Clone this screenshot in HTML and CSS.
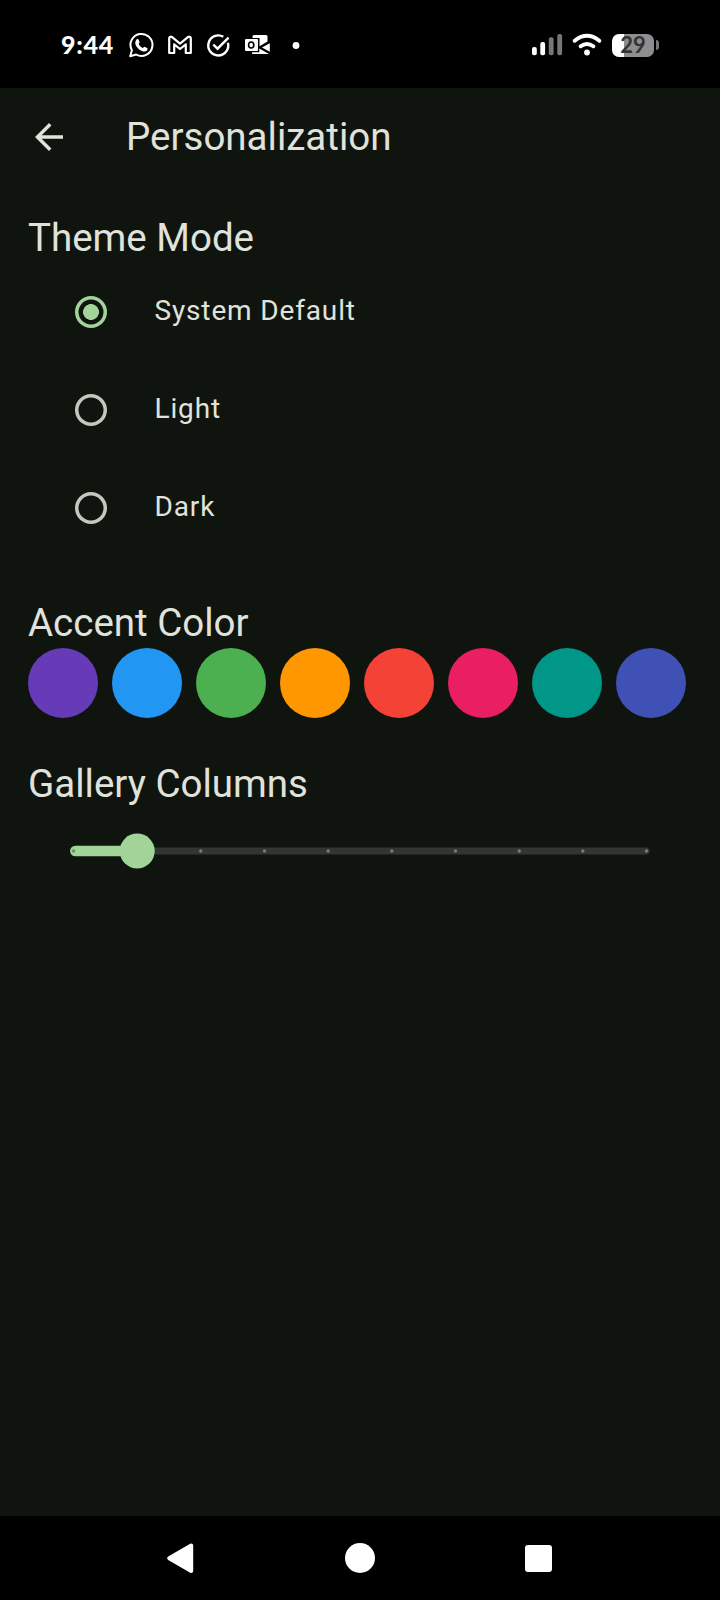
FILE: index.html
```html
<!DOCTYPE html>
<html lang="en">
<head>
<meta charset="utf-8">
<title>Personalization</title>
<link rel="stylesheet" href="styles.css">
</head>
<body>
<div class="screen">
  <header class="status">
    <span class="clock">9:44</span>
    <svg class="notifications" width="180" height="32" viewBox="126 29 180 32" fill="none" stroke="#fff" stroke-width="2">
      <path d="M130.2 56.2l1.7-5.9a11 11 0 1 1 4.2 4.2z" stroke-linejoin="round"/>
      <path d="M136.6 39.4c.6-.6 1.6-.5 1.9.2l1 2.3c.3.8-.9 1.6-.8 2.2.7 1.6 2 2.900 3.800 3.800.7.3 1.500-1.400 2.300-1l2.400 1.200c.7.4.4 1.700-.2 2.400-1.200 1.300-3 1.400-5.200.500-3.300-1.400-5.500-4-6.300-6.400-.6-2 .1-4.200 1.100-5.200z" fill="#fff" stroke="none"/>
      <path d="M169.200 53V38.700q0-2.500 2.600-1.800L180 43.600l8.200-6.700q2.600-.7 2.600 1.800V53h-5v-8.700l-5.800 4.700-5.800-4.700V53z" stroke-linejoin="round" stroke-width="2.200"/>
      <path d="M223.300 36.800a10 10 0 1 0 4.600 6M213.300 44.500l4.200 4.200L228.600 37.600" stroke-width="2.400"/>
      <g stroke="none" fill="#fff">
        <path d="M252.500 38V36.500q0-1.500 1.500-1.500H266q1.500 0 1.500 1.500V41.500L259.500 46.300V38z"/>
        <path d="M262 47.600L269.800 43.200V51.800z"/>
        <path d="M252 53V52.200H259.300V48.500L269 54H253q-1 0-1-1z"/>
        <rect x="245" y="39" width="13" height="12" rx="1"/>
        <ellipse cx="251.200" cy="45" rx="2.600" ry="3" fill="none" stroke="#000" stroke-width="1.600"/>
        <circle cx="296" cy="45.500" r="3.400"/>
      </g>
    </svg>
    <svg class="signals" width="76" height="32" viewBox="528 29 76 32" fill="none">
      <g fill="#fff">
        <rect x="532" y="47" width="4.800" height="8.300" rx="2"/>
        <rect x="540.300" y="42" width="4.800" height="13.300" rx="2"/>
        <rect x="548.800" y="37.300" width="4.800" height="18" rx="2" fill="#777"/>
        <rect x="557.300" y="34" width="4.800" height="21.300" rx="2" fill="#777"/>
        <circle cx="587" cy="52.500" r="2.900"/>
      </g>
      <path d="M574.700 40.700Q587 31 599.300 40.700M580.700 46.300Q587 41.500 593.300 46.300" stroke="#fff" stroke-width="3.900" stroke-linecap="round"/>
    </svg>
    <div class="battery"><span class="level">29</span></div>
    <span class="battery-cap"></span>
  </header>

  <div class="appbar">
    <svg width="42" height="42" viewBox="0 0 24 24" fill="#e0e3dc"><path d="M20 11H7.830l5.590-5.590L12 4l-8 8 8 8 1.410-1.410L7.830 13H20v-2z"/></svg>
    <h1 class="title">Personalization</h1>
  </div>

  <main class="content">
    <h2 class="title">Theme Mode</h2>
    <div class="option"><span class="radio selected"></span><span class="label">System Default</span></div>
    <div class="option"><span class="radio"></span><span class="label">Light</span></div>
    <div class="option"><span class="radio"></span><span class="label">Dark</span></div>

    <h2 class="title spaced">Accent Color</h2>
    <div class="swatches">
      <span class="swatch purple"></span><span class="swatch blue"></span>
      <span class="swatch green"></span><span class="swatch orange"></span>
      <span class="swatch red"></span><span class="swatch pink"></span>
      <span class="swatch teal"></span><span class="swatch indigo"></span>
    </div>

    <h2 class="title spaced">Gallery Columns</h2>
    <svg class="slider" width="664" height="84" viewBox="28 809 664 84">
      <rect x="100" y="847.500" width="549.500" height="7" rx="3.500" fill="#323630"/>
      <path d="M137 845.700H75.300a5.250 5.250 0 0 0 0 10.500H137z" fill="#a2d399"/>
      <circle cx="73.500" cy="851" r="1.750" fill="#5e9a5a"/>
      <g fill="#767b73">
        <circle cx="200.800" cy="851" r="1.750"/><circle cx="264.500" cy="851" r="1.750"/>
        <circle cx="328.200" cy="851" r="1.750"/><circle cx="391.800" cy="851" r="1.750"/>
        <circle cx="455.500" cy="851" r="1.750"/><circle cx="519.200" cy="851" r="1.750"/>
        <circle cx="582.800" cy="851" r="1.750"/><circle cx="646.500" cy="851" r="1.750"/>
      </g>
      <circle cx="137.200" cy="851" r="17.500" fill="#a2d399"/>
    </svg>
  </main>

  <nav class="navbar">
    <svg width="28" height="32" viewBox="0 0 28 32"><path d="M3.200 16.300L25.200 3.600V29z" fill="#fff" stroke="#fff" stroke-width="4" stroke-linejoin="round"/></svg>
    <span class="home"></span>
    <span class="recents"></span>
  </nav>
</div>
</body>
</html>
```
FILE: styles.css
```css
* { box-sizing: border-box; }
body { margin: 0; background: #000; }
.screen {
  width: 720px;
  height: 1600px;
  display: flex;
  flex-direction: column;
  background: #0f140e;
  color: #e0e3dc;
  font-family: Roboto, sans-serif;
  overflow: hidden;
}
.status {
  height: 88px;
  flex: none;
  display: flex;
  align-items: center;
  padding: 2px 61px 0 61px;
  background: #000;
}
.clock {
  width: 65px;
  padding-bottom: 2px;
  font: 900 25px/32px Lato, sans-serif;
  letter-spacing: 0.7px;
  color: #fff;
}
.signals { margin-left: auto; }
.battery {
  width: 42px;
  height: 23px;
  margin-left: 8px;
  border-radius: 7px;
  background: linear-gradient(90deg, #fff 12px, #8e8e8e 12px);
  text-align: center;
}
.level {
  display: block;
  font: 700 22px/21px Lato, sans-serif;
  color: #333;
}
.battery-cap {
  width: 3px;
  height: 10px;
  margin-left: 2px;
  border-radius: 0 3px 3px 0;
  background: #777;
}
.appbar {
  height: 98px;
  flex: none;
  display: flex;
  align-items: center;
  gap: 56px;
  padding-left: 28px;
}
.title {
  margin: 0;
  height: 49px;
  font-size: 38.5px;
  line-height: 47px;
  font-weight: 400;
}
.content {
  flex: 1;
  display: flex;
  flex-direction: column;
  padding: 28px 28px 0;
}
.spaced { margin-top: 42px; }
.option {
  height: 98px;
  display: flex;
  align-items: center;
  gap: 47.5px;
  padding-left: 47px;
  font-size: 28px;
  line-height: 42px;
  letter-spacing: 0.85px;
}
.label { padding-bottom: 2px; }
.radio {
  width: 32px;
  height: 32px;
  border-radius: 50%;
  box-shadow: inset 0 0 0 3.5px #c2c8bd;
}
.radio.selected {
  background: radial-gradient(circle, #a2d399 7.600px, transparent 8.200px);
  box-shadow: inset 0 0 0 3.5px #a2d399;
}
.swatches { display: flex; gap: 14px; }
.swatch { width: 70px; height: 70px; border-radius: 50%; }
.purple { background: #673ab7; }
.blue { background: #2196f3; }
.green { background: #4caf50; }
.orange { background: #ff9800; }
.red { background: #f44336; }
.pink { background: #e91e63; }
.teal { background: #009688; }
.indigo { background: #3f51b5; }
.slider { display: block; }
.navbar {
  height: 84px;
  flex: none;
  display: flex;
  align-items: center;
  justify-content: space-between;
  padding: 0 168px 0 166px;
  background: #000;
}
.home { width: 30px; height: 30px; border-radius: 50%; background: #fff; }
.recents { width: 27px; height: 27px; border-radius: 3px; background: #fff; }
```
